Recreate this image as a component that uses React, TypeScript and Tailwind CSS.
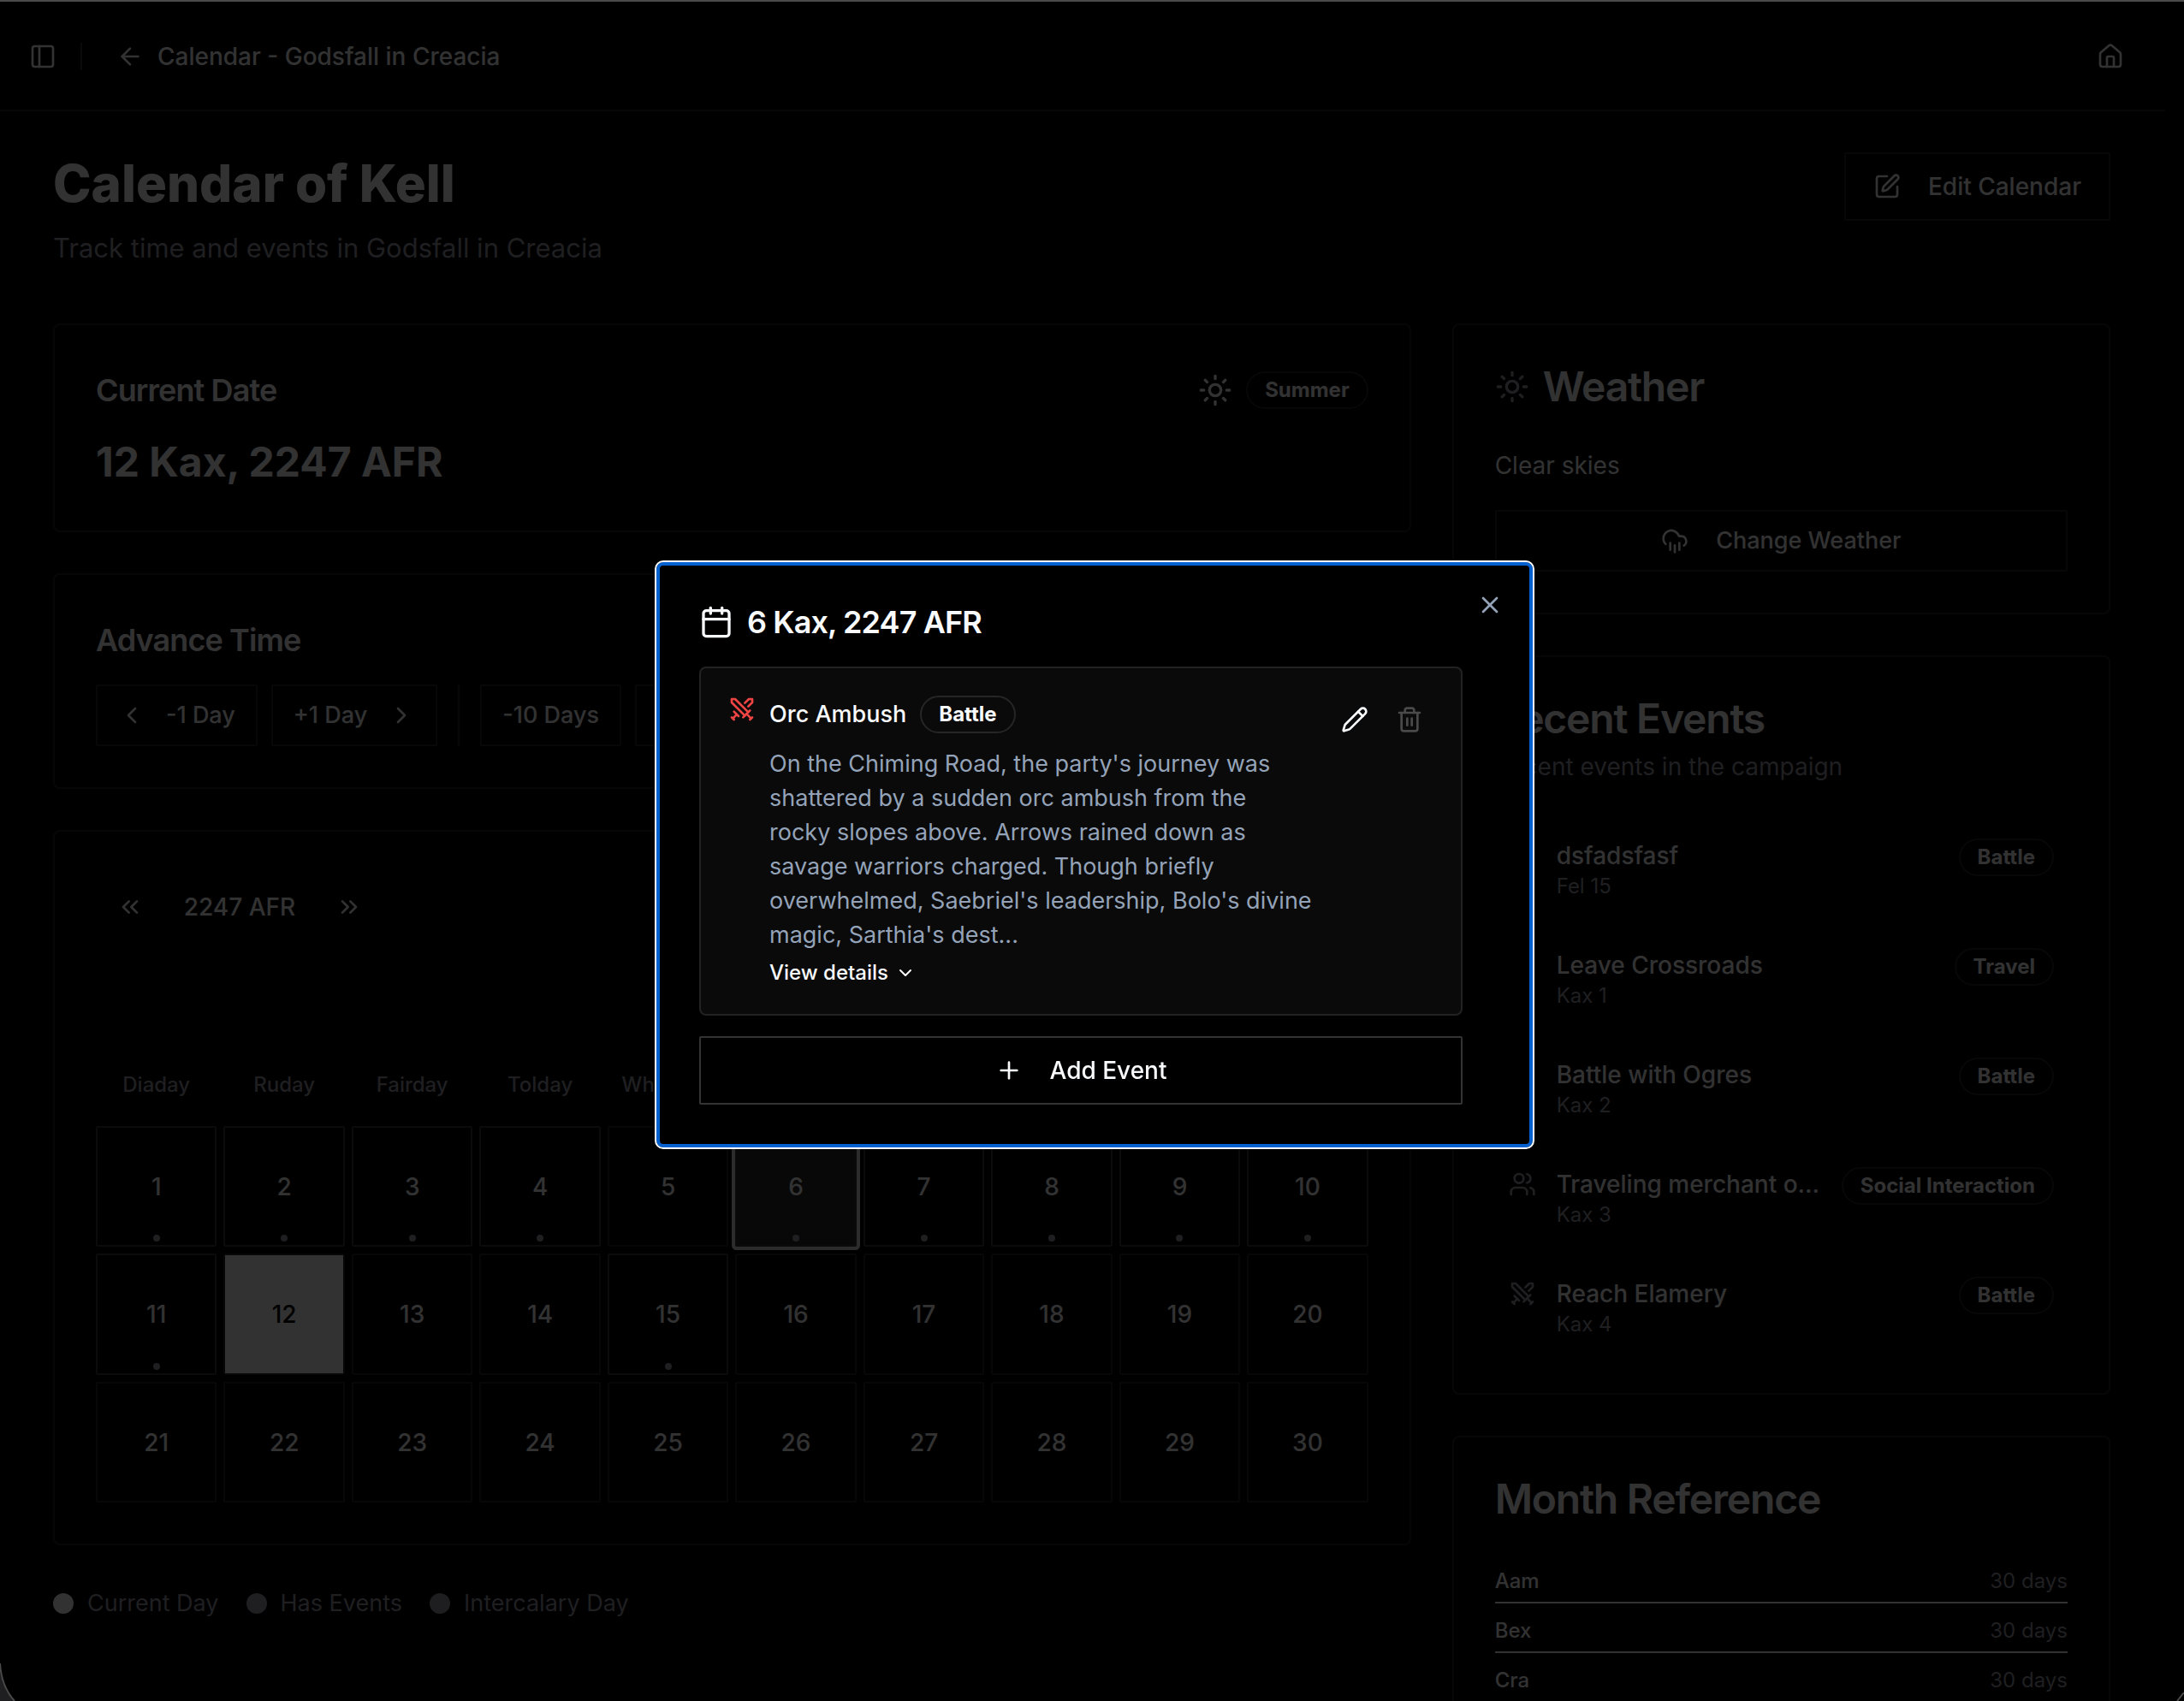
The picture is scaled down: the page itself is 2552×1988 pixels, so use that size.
import type { ReactNode } from 'react';
import {
  ArrowLeft,
  Calendar,
  ChevronDown,
  ChevronLeft,
  ChevronRight,
  ChevronsLeft,
  ChevronsRight,
  CloudRain,
  House,
  Map,
  PanelLeft,
  Pencil,
  Plus,
  SquarePen,
  Sun,
  Swords,
  Trash2,
  Users,
  X,
} from 'lucide-react';
import type { LucideIcon } from 'lucide-react';

interface CampaignEvent {
  title: string;
  date: string;
  type: string;
  icon: LucideIcon;
}

const weekdays = ['Diaday', 'Ruday', 'Fairday', 'Tolday', 'Whiteday'];
const days = Array.from({ length: 30 }, (_, i) => i + 1);
const daysWithEvents = [1, 2, 3, 4, 6, 7, 8, 9, 10, 11, 15];
const currentDay = 12;
const selectedDay = 6;

const recentEvents: CampaignEvent[] = [
  { title: 'dsfadsfasf', date: 'Fel 15', type: 'Battle', icon: Swords },
  { title: 'Leave Crossroads', date: 'Kax 1', type: 'Travel', icon: Map },
  { title: 'Battle with Ogres', date: 'Kax 2', type: 'Battle', icon: Swords },
  { title: 'Traveling merchant o…', date: 'Kax 3', type: 'Social Interaction', icon: Users },
  { title: 'Reach Elamery', date: 'Kax 4', type: 'Battle', icon: Swords },
];

const months = [
  { name: 'Aam', days: 30 },
  { name: 'Bex', days: 30 },
  { name: 'Cra', days: 30 },
];

const legend = [
  { label: 'Current Day', dot: 'bg-slate-50' },
  { label: 'Has Events', dot: 'bg-[#999da6]' },
  { label: 'Intercalary Day', dot: 'bg-[#94969e]' },
];

const description = [
  "On the Chiming Road, the party's journey was",
  'shattered by a sudden orc ambush from the',
  'rocky slopes above. Arrows rained down as',
  'savage warriors charged. Though briefly',
  "overwhelmed, Saebriel's leadership, Bolo's divine",
  "magic, Sarthia's dest...",
];

function Card({ children }: { children: ReactNode }) {
  return <section className="rounded-lg border-2 border-[#222] p-12">{children}</section>;
}

function Badge({ children }: { children: ReactNode }) {
  return (
    <span className="inline-flex shrink-0 items-center rounded-full border-2 border-[#262626] px-5 py-1 text-[24px] leading-[32px] font-bold whitespace-nowrap">
      {children}
    </span>
  );
}

function OutlineButton({ children, className = '' }: { children: ReactNode; className?: string }) {
  return (
    <button
      type="button"
      className={`flex items-center justify-center rounded-[2px] border-2 leading-[40px] font-medium whitespace-nowrap ${className}`}
    >
      {children}
    </button>
  );
}

function DayCell({ day }: { day: number }) {
  const isCurrent = day === currentDay;
  const isSelected = day === selectedDay;
  const hasEvents = daysWithEvents.includes(day);

  let look = 'border-[#262626]';
  if (isCurrent) look = 'border-[#262626] bg-slate-50 bg-clip-padding text-black';
  else if (isSelected) look = 'border-[#333] bg-[#2c2c2c] ring-4 ring-[#dcdcdc]';
  else if (hasEvents) look = 'border-[#3a3a3a]';

  return (
    <button
      type="button"
      className={`relative flex aspect-square items-center justify-center rounded-[2px] border-2 text-[28px] leading-[40px] font-medium ${look}`}
    >
      {day}
      {hasEvents && (
        <span className="absolute bottom-1 left-1/2 size-2 -translate-x-1/2 rounded-full bg-[#999da6]" />
      )}
    </button>
  );
}

function Header() {
  return (
    <header className="flex h-[130px] items-center justify-between border-b-2 border-[#222] pt-1 pr-12 pl-[34px]">
      <div className="flex items-center">
        <button type="button" aria-label="Toggle sidebar">
          <PanelLeft size={32} />
        </button>
        <div className="ml-7 h-8 w-[2px] bg-[#333]" />
        <a href="#" className="ml-10 flex items-center gap-4 text-[28px] leading-[40px] font-medium">
          <ArrowLeft size={32} />
          Calendar - Godsfall in Creacia
        </a>
      </div>
      <a href="#" aria-label="Home">
        <House size={32} />
      </a>
    </header>
  );
}

function CalendarPage() {
  return (
    <main className="py-12 pr-16 pl-[62px]">
      <div className="mb-16 flex items-start justify-between">
        <div>
          <h1 className="text-[60px] leading-[72px] font-extrabold">Calendar of Kell</h1>
          <p className="mt-4 text-[31px] leading-[48px] text-[#999da6]">
            Track time and events in Godsfall in Creacia
          </p>
        </div>
        <OutlineButton className="h-20 gap-8 border-[#262626] px-8 text-[28px]">
          <SquarePen size={32} />
          Edit Calendar
        </OutlineButton>
      </div>

      <div className="grid grid-cols-3 items-start gap-12">
        <div className="col-span-2 flex flex-col gap-12">
          <Card>
            <div className="flex h-14 items-center justify-between">
              <h2 className="text-[36px] leading-[56px] font-semibold tracking-tight">Current Date</h2>
              <div className="flex items-center gap-4">
                <Sun size={40} />
                <Badge>Summer</Badge>
              </div>
            </div>
            <p className="mt-6 text-[48px] leading-[64px] font-bold">12 Kax, 2247 AFR</p>
          </Card>

          <Card>
            <h2 className="text-[36px] leading-[56px] font-semibold tracking-tight">Advance Time</h2>
            <div className="mt-6 flex gap-4">
              <OutlineButton className="h-[72px] gap-6 border-[#262626] px-6 text-[27px]">
                <ChevronLeft size={32} />
                -1 Day
              </OutlineButton>
              <OutlineButton className="h-[72px] gap-6 border-[#262626] px-6 text-[27px]">
                +1 Day
                <ChevronRight size={32} />
              </OutlineButton>
              <div className="mx-2 w-[2px] bg-[#262626]" />
              <OutlineButton className="h-[72px] border-[#262626] px-6 text-[27px]">-10 Days</OutlineButton>
              <OutlineButton className="h-[72px] border-[#262626] px-6 text-[27px]">+10 Days</OutlineButton>
            </div>
          </Card>

          <Card>
            <div className="flex items-center">
              <button type="button" aria-label="Previous year" className="flex size-20 items-center justify-center">
                <ChevronsLeft size={32} />
              </button>
              <span className="w-44 text-center text-[28px] leading-[40px] font-medium">2247 AFR</span>
              <button type="button" aria-label="Next year" className="flex size-20 items-center justify-center">
                <ChevronsRight size={32} />
              </button>
            </div>
            <div className="mt-34 mb-4 grid grid-cols-10 gap-2">
              {weekdays.map((name) => (
                <div key={name} className="py-4 text-center text-[24px] leading-[32px] font-medium text-[#999da6]">
                  {name}
                </div>
              ))}
            </div>
            <div className="grid grid-cols-10 gap-2">
              {days.map((day) => (
                <DayCell key={day} day={day} />
              ))}
            </div>
          </Card>

          <div className="flex items-center gap-8">
            {legend.map((item) => (
              <div key={item.label} className="flex items-center gap-4 text-[27px] leading-[40px] text-[#999da6]">
                <span className={`size-6 rounded-full ${item.dot}`} />
                {item.label}
              </div>
            ))}
          </div>
        </div>

        <div className="flex flex-col gap-12">
          <Card>
            <h2 className="flex items-center gap-4 text-[48px] leading-[48px] font-semibold tracking-tight">
              <Sun size={40} className="text-[#999da6]" />
              Weather
            </h2>
            <p className="mt-12 text-[28px] leading-[40px]">Clear skies</p>
            <OutlineButton className="mt-8 h-[72px] w-full gap-8 border-[#262626] text-[27px]">
              <CloudRain size={32} />
              Change Weather
            </OutlineButton>
          </Card>

          <Card>
            <h2 className="text-[48px] leading-[48px] font-semibold tracking-tight">Recent Events</h2>
            <p className="mt-3 text-[28px] leading-[40px] text-[#999da6]">Recent events in the campaign</p>
            <ul className="mt-12 flex flex-col gap-6">
              {recentEvents.map(({ title, date, type, icon: Icon }) => (
                <li key={title} className="flex items-start gap-6 p-4">
                  <Icon size={32} className="mt-1 shrink-0 text-[#999da6]" />
                  <div className="min-w-0 flex-1">
                    <div className="text-[28px] leading-[40px] font-medium whitespace-nowrap">{title}</div>
                    <div className="text-[24px] leading-[32px] text-[#999da6]">{date}</div>
                  </div>
                  <Badge>{type}</Badge>
                </li>
              ))}
            </ul>
          </Card>

          <Card>
            <h2 className="text-[48px] leading-[48px] font-semibold tracking-tight">Month Reference</h2>
            <ul className="mt-12 flex flex-col gap-2">
              {months.map((month) => (
                <li
                  key={month.name}
                  className="flex justify-between border-b-2 border-slate-50 py-2 text-[24px] leading-[32px]"
                >
                  <span className="font-medium">{month.name}</span>
                  <span className="text-[#999da6]">{month.days} days</span>
                </li>
              ))}
            </ul>
          </Card>
        </div>
      </div>
    </main>
  );
}

function DayDialog() {
  return (
    <div className="fixed inset-0 flex items-center justify-center bg-black/80 pt-2.5 pl-1.5">
      <div
        role="dialog"
        aria-labelledby="day-title"
        className="relative w-[1024px] rounded-lg border-4 border-[#0561cf] bg-black p-[46px] outline-2 outline-white"
      >
        <h2
          id="day-title"
          className="flex items-center gap-4 text-[36px] leading-[40px] font-semibold tracking-tight"
        >
          <Calendar size={40} />6 Kax, 2247 AFR
        </h2>
        <button type="button" aria-label="Close" className="absolute top-[30px] right-[30px] text-[#94a3b8]">
          <X size={32} />
        </button>

        <div className="mt-8 mr-8 flex items-start gap-4 rounded-lg border-2 border-[#222] bg-[#0a0a0a] p-8">
          <Swords size={32} className="shrink-0 text-[#ef4444]" />
          <div className="min-w-0 flex-1">
            <div className="flex items-center gap-4">
              <h3 className="text-[27px] leading-[40px] font-medium">Orc Ambush</h3>
              <Badge>Battle</Badge>
            </div>
            <p className="mt-4 text-[27px] leading-[40px] whitespace-nowrap text-[#94a3b8]">
              {description.map((line) => (
                <span key={line} className="block">
                  {line}
                </span>
              ))}
            </p>
            <button type="button" className="mt-2 flex items-center gap-2 text-[24px] leading-[32px] font-medium">
              View details
              <ChevronDown size={24} />
            </button>
          </div>
          <div className="flex gap-2">
            <button type="button" aria-label="Edit event" className="flex size-14 items-center justify-center">
              <Pencil size={32} />
            </button>
            <button
              type="button"
              aria-label="Delete event"
              className="flex size-14 items-center justify-center text-[#4a4a4a]"
            >
              <Trash2 size={32} />
            </button>
          </div>
        </div>

        <div className="mt-6 mr-8">
          <OutlineButton className="h-20 w-full gap-8 border-[#333] text-[28px]">
            <Plus size={32} />
            Add Event
          </OutlineButton>
        </div>
      </div>
    </div>
  );
}

// Rounded lower corners and top edge of the application window.
function WindowFrame() {
  return (
    <div className="pointer-events-none fixed inset-0 border-t-2 border-[#4a4a4a]">
      <svg className="absolute bottom-0 left-0" width="20" height="48" viewBox="0 0 20 48" fill="none">
        <path d="M0 12C2 26 8 38 17 48H0Z" fill="#1f1f21" />
        <path d="M0 4C1 22 7 37 17 48" stroke="#4a4a4a" strokeWidth="2" />
      </svg>
      <svg className="absolute right-0 bottom-0" width="10" height="10" viewBox="0 0 10 10" fill="none">
        <path d="M10 0L2 10" stroke="#4a4a4a" strokeWidth="2" />
      </svg>
    </div>
  );
}

export default function App() {
  return (
    <div className="h-screen overflow-hidden bg-black pr-[22px] font-['Inter',sans-serif] text-slate-50">
      <Header />
      <CalendarPage />
      <DayDialog />
      <WindowFrame />
    </div>
  );
}
